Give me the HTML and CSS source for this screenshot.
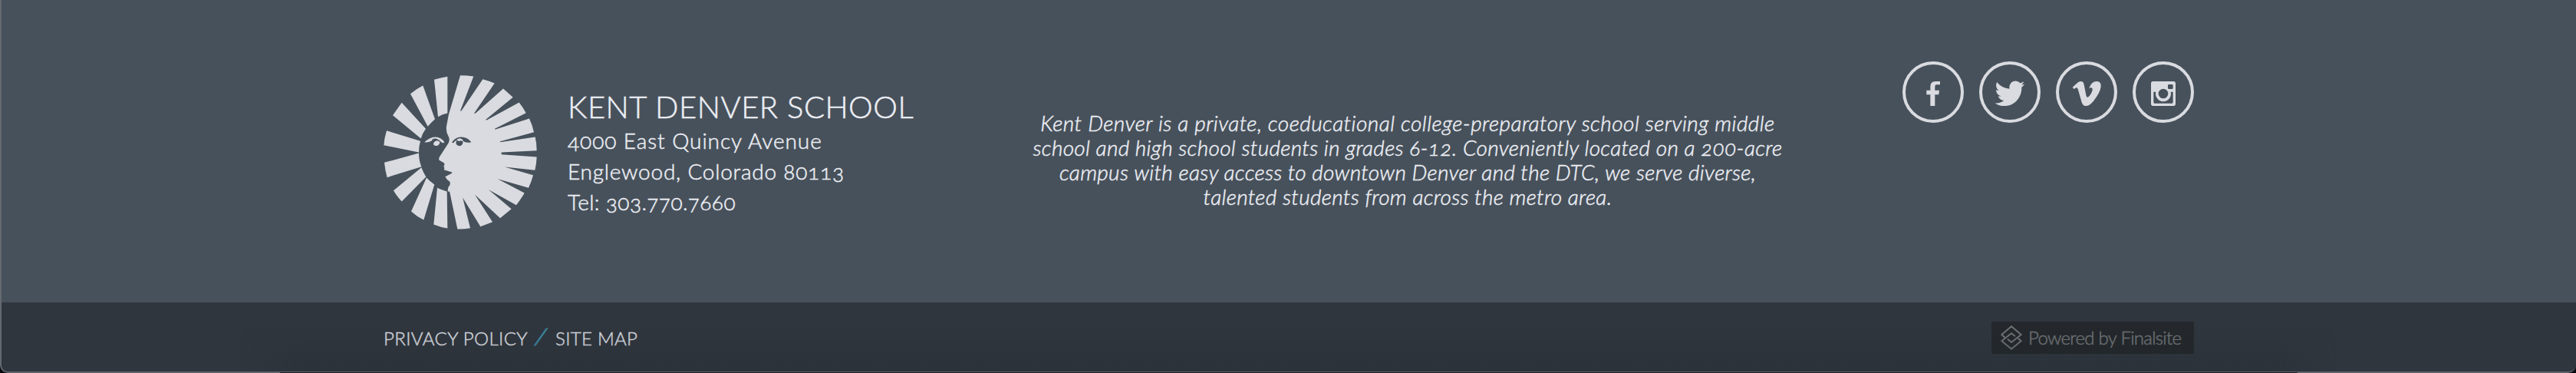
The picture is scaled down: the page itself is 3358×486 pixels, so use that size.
FILE: index.html
```
<!DOCTYPE html>
<html lang="en">
<head>
<meta charset="utf-8">
<title>Kent Denver School</title>
<link rel="stylesheet" href="styles.css">
</head>
<body>
<footer class="footer">
  <div class="footer-main">
    <div class="school">
      <svg class="sun" viewBox="30 38 600 602" aria-hidden="true">
        <g class="light">
          <path d="M228 55Q254 47 280 43V186Q260 190 243 200ZM135 110Q158 91 184 78L231 209Q216 222 203 238ZM101 145L66 194 176 285Q182 265 195 247ZM42 254Q33 282 31 311L168 339Q168 315 174 295ZM33 379Q36 410 44 437L178 395Q168 370 168 342ZM69 488Q82 511 101 531L196 435Q186 418 178 398ZM138 570Q160 590 187 603L229 465Q212 453 198 438ZM226 621Q253 632 280 636L278 492Q259 487 240 478Z"/>
          <path d="M330 38Q356 38 382 42L330 177H334L418 53Q441 59 464 69L384 187H389L498 90 536 124 430 211 432 214 560 144Q576 164 587 185L465 247 466 250 600 207Q612 232 618 260L486 296V299L623 279Q629 305 629 332L491 339V347L629 357Q628 384 622 409L483 394V390L615 428Q608 454 597 478L459 438 461 435 581 498Q566 524 549 545L421 474 424 471 530 560 486 596 377 495H381L456 611 409 629 331 502H336L369 635Q344 640 319 639L288 491Q281 495 281 488Q282 474 288 469Q292 462 289 454Q277 446 271 434L297 421 298 417 266 407Q270 400 265 394Q271 385 266 380L248 370Q244 364 250 355L284 302Q290 289 284 277Q273 261 276 237L285 190Z"/>
          <path d="M190 300Q209 280 232 279Q257 280 268 300Q262 305 256 299L247 291A12 12 0 1 1 225 308Q224 302 230 297Q226 290 219 293Q205 302 190 300Z"/>
        </g>
        <g class="dark">
          <path d="M297 301Q309 280 333 279Q359 280 373 299Q355 304 339 294A13 13 0 1 1 314 306Q311 299 317 292Q307 294 303 302Z"/>
          <path d="M221 288Q233 281 247 291Q256 303 243 294Q232 291 222 304Q216 297 221 288Z"/>
        </g>
        <path class="light" d="M317 289Q327 280 339 289Q345 299 332 293Q324 297 317 292Z"/>
      </svg>
      <address class="contact">
        <h2 class="school-name">KENT DENVER SCHOOL</h2>
        <div class="street">4000 East Quincy Avenue</div>
        <div class="city">Englewood, Colorado 80113</div>
        <div class="phone">Tel: 303.770.7660</div>
      </address>
    </div>
    <p class="about">
      <span class="about-a">Kent Denver is a private, coeducational college-preparatory school serving middle</span>
      <span class="about-b">school and high school students in grades 6-12. Conveniently located on a 200-acre</span>
      <span class="about-b">campus with easy access to downtown Denver and the DTC, we serve diverse,</span>
      <span class="about-b">talented students from across the metro area.</span>
    </p>
    <nav class="social">
      <a class="social-link" aria-label="Facebook"><svg viewBox="0 0 240 240"><path d="M147 78V91H134Q127 91 127 99V113H144L142 130H127V174H109V130H94V113H109V99Q109 78 129 78Z"/></svg></a>
      <a class="social-link" aria-label="Twitter"><svg viewBox="0 0 24 24"><path transform="translate(6.15 6.55) scale(.485 .5)" d="M24 4.557c-.883.392-1.832.656-2.828.775 1.017-.609 1.798-1.574 2.165-2.724-.951.564-2.005.974-3.127 1.195-.897-.957-2.178-1.555-3.594-1.555-3.179 0-5.515 2.966-4.797 6.045-4.091-.205-7.719-2.165-10.148-5.144-1.29 2.213-.669 5.108 1.523 6.574-.806-.026-1.566-.247-2.229-.616-.054 2.281 1.581 4.415 3.949 4.89-.693.188-1.452.232-2.224.084.626 1.956 2.444 3.379 4.6 3.419-2.07 1.623-4.678 2.348-7.29 2.04 2.179 1.397 4.768 2.212 7.548 2.212 9.142 0 14.307-7.721 13.995-14.646.962-.695 1.797-1.562 2.457-2.549z"/></svg></a>
      <a class="social-link" aria-label="Vimeo"><svg viewBox="0 0 240 240"><path d="M65 102Q84 82 93 79Q107 75 110 91L117 126Q119 140 123 140Q128 140 136 128Q146 112 142 105Q139 100 130 105Q139 77 161 78Q177 79 176 98Q174 120 147 155Q128 177 114 174Q105 172 101 160L88 115Q85 101 79 103L71 108Z"/></svg></a>
      <a class="social-link" aria-label="Instagram"><svg viewBox="0 0 240 240"><path fill-rule="evenodd" d="M80 78H160Q168 78 168 86V166Q168 174 160 174H80Q72 174 72 166V86Q72 78 80 78ZM142 90Q138 90 138 94V104Q138 108 142 108H154Q158 108 158 104V94Q158 90 154 90ZM82 119V160Q82 164 86 164H154Q158 164 158 160V119H149A30 30 0 1 1 91 119ZM120 107A19 19 0 1 0 120 145A19 19 0 1 0 120 107Z"/></svg></a>
    </nav>
  </div>
  <div class="footer-bar">
    <nav class="legal"><a class="privacy">PRIVACY POLICY</a><span class="slash">/</span><a class="sitemap">SITE MAP</a></nav>
    <a class="powered">
      <svg class="powered-icon" viewBox="0 0 84 96" aria-hidden="true"><path d="M16 47L4 36 42 4 80 36 42 66 27 53M68 50L80 61 42 92 4 61 42 31 57 43"/></svg>
      <span class="powered-text">Powered by Finalsite</span>
    </a>
  </div>
  <div class="window-edge"></div>
</footer>
</body>
</html>
```
FILE: styles.css
```
body {
  margin: 0;
  background: #08090f;
  font-family: Lato, "Open Sans", sans-serif;
  font-weight: 300;
  font-variant-numeric: oldstyle-nums;
  color: #eceef4;
  -webkit-text-stroke: 0.5px currentColor;
}

.footer {
  position: relative;
  display: flex;
  flex-direction: column;
  height: 486px;
  overflow: hidden;
  border-radius: 0 0 10px 10px;
}

.footer-main {
  display: flex;
  align-items: flex-start;
  height: 394px;
  padding: 0 498px 0 500px;
  box-sizing: border-box;
  background: #47515b;
}

.school {
  display: flex;
  width: 835px;
}

.sun {
  width: 200px;
  height: 201px;
  margin-top: 97.5px;
}

.light { fill: #d9dbe0; }
.dark { fill: #47515b; }

.contact {
  padding: 117px 0 0 40px;
  font-size: 28px;
  font-style: normal;
  line-height: 40px;
  white-space: nowrap;
}

.school-name {
  margin: 0 0 2px;
  font-size: 40px;
  font-weight: 300;
  line-height: 44px;
  letter-spacing: 0.5px;
}

.street { letter-spacing: 0.95px; }
.city { letter-spacing: 0.78px; }
.phone { letter-spacing: 0.4px; }

.about {
  width: 1000px;
  margin: 144px 0 0;
  font-size: 28px;
  font-style: italic;
  line-height: 32px;
  text-align: center;
  white-space: nowrap;
}

.about span { display: block; }
.about-a { letter-spacing: 0.47px; }
.about-b { letter-spacing: 0.33px; }

.social {
  display: flex;
  gap: 20px;
  margin: 80px 0 0 auto;
}

.social-link {
  width: 80px;
  height: 80px;
  box-sizing: border-box;
  border: 4px solid #d9dbe0;
  border-radius: 50%;
}

.social-link svg {
  display: block;
  width: 80px;
  height: 80px;
  margin: -4px;
  fill: #d9dbe0;
}

.footer-bar {
  display: flex;
  justify-content: space-between;
  align-items: flex-start;
  height: 92px;
  padding: 0 498px 0 500px;
  box-sizing: border-box;
  background: #30363e;
}

.legal {
  display: flex;
  margin-top: 33px;
  font-size: 24px;
  line-height: 28px;
  color: #d5d8df;
  white-space: nowrap;
}

.privacy { width: 198px; letter-spacing: 0.39px; }
.sitemap { letter-spacing: 0.3px; }

.slash {
  width: 26px;
  font-size: 29px;
  font-weight: 400;
  line-height: 22px;
  color: #3b869f;
  transform: skewX(-17deg);
}

.powered {
  display: flex;
  align-items: center;
  width: 264px;
  height: 42px;
  margin-top: 24.5px;
  padding-left: 12px;
  box-sizing: border-box;
  background: #24282c;
  color: #6f7376;
}

.powered-icon {
  width: 28px;
  height: 32px;
  margin-right: 8px;
  fill: none;
  stroke: #6f7376;
  stroke-width: 6;
  stroke-linejoin: round;
}

.powered-text {
  font-size: 24px;
  letter-spacing: -0.7px;
  white-space: nowrap;
}

/* window frame with the soft shade rising from its lower edge */
.window-edge {
  position: absolute;
  inset: 0;
  border-left: 2px solid #646970;
  border-bottom: 2px solid #5f6269;
  border-radius: 0 0 10px 10px;
  pointer-events: none;
}

.window-edge::before {
  content: "";
  position: absolute;
  inset: auto 310px 0;
  height: 60px;
  background: linear-gradient(to bottom, transparent, rgba(28, 38, 42, 0.22));
  mask-image: linear-gradient(to right, transparent, #000 80px calc(100% - 80px), transparent);
}

.window-edge::after {
  content: "";
  position: absolute;
  inset: auto 363px -2px;
  height: 1px;
  background: #1b1c22;
}
```
